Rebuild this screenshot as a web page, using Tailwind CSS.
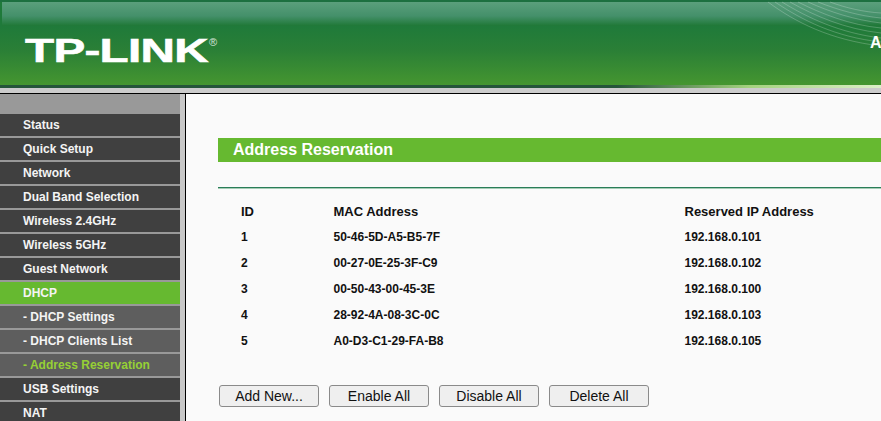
<!DOCTYPE html>
<html>
<head>
<meta charset="utf-8">
<script src="https://cdn.jsdelivr.net/npm/@tailwindcss/browser@4"></script>
</head>
<body class="w-[881px] h-[421px] overflow-hidden bg-[#fafafa] font-['Liberation_Sans',Arial,sans-serif]">
<header class="relative h-[85px] overflow-hidden bg-[linear-gradient(to_bottom,#1f7a3a_0,#1f7a3a_26px,#2a7f36_50px,#459630_85px)]">
  <div class="absolute left-[2px] right-0 top-[2px] h-[24px] bg-[linear-gradient(to_bottom,#5b9f7c_0,#44906a_14px,#1f7836_24px)]"></div>
  <div class="absolute left-0 right-0 top-0 h-[2px] bg-[#1d7040]"></div>
  <svg class="absolute right-0 top-0" width="181" height="50" viewBox="0 0 181 50" fill="none" stroke="#ffffff" stroke-opacity="0.22">
    <path d="M68 2 C95 22 130 40 181 46"/>
    <path d="M75 2 C102 20 135 37 181 42"/>
    <path d="M82 2 C108 18 140 33 181 38"/>
    <path d="M90 2 C115 16 145 29 181 33"/>
    <path d="M98 2 C122 14 150 25 181 28"/>
    <path d="M108 2 C130 12 155 20 181 23"/>
    <path d="M118 2 C138 10 160 16 181 18"/>
    <path d="M130 2 C146 8 164 12 181 13"/>
  </svg>
  <div class="absolute left-[25px] top-[30px] text-[34px] leading-[40px] font-bold text-white origin-left scale-x-[1.4] tracking-[-0.5px] [-webkit-text-stroke:0.6px_white]">TP-LINK</div>
  <div class="absolute left-[209px] top-[36px] text-[11px] leading-[12px] text-white/80">®</div>
  <div class="absolute left-[870px] top-[34px] text-[16px] leading-[18px] font-bold text-white">A</div>
</header>
<div class="h-[3px] bg-[linear-gradient(to_right,#25553a_0,#25553a_70%,#a4d27e_85%,#dcefc8_100%)]"></div>
<div class="h-[5px] bg-[#cccccc]"></div>
<div class="h-px bg-black"></div>
<div class="flex h-[327px]">
  <nav class="w-[180px] shrink-0 bg-[#999999] pt-[20px] text-[12px] leading-[22px] font-bold text-[#f4f4f4] flex flex-col gap-[2px]">
    <div class="h-[22px] shrink-0 pl-[23px] bg-[#404040]">Status</div>
    <div class="h-[22px] shrink-0 pl-[23px] bg-[#404040]">Quick Setup</div>
    <div class="h-[22px] shrink-0 pl-[23px] bg-[#404040]">Network</div>
    <div class="h-[22px] shrink-0 pl-[23px] bg-[#404040]">Dual Band Selection</div>
    <div class="h-[22px] shrink-0 pl-[23px] bg-[#404040]">Wireless 2.4GHz</div>
    <div class="h-[22px] shrink-0 pl-[23px] bg-[#404040]">Wireless 5GHz</div>
    <div class="h-[22px] shrink-0 pl-[23px] bg-[#404040]">Guest Network</div>
    <div class="h-[22px] shrink-0 pl-[23px] bg-[#66b930]">DHCP</div>
    <div class="h-[22px] shrink-0 pl-[23px] bg-[#5e5e5e]">- DHCP Settings</div>
    <div class="h-[22px] shrink-0 pl-[23px] bg-[#5e5e5e]">- DHCP Clients List</div>
    <div class="h-[22px] shrink-0 pl-[23px] bg-[#5e5e5e] text-[#96d035]">- Address Reservation</div>
    <div class="h-[22px] shrink-0 pl-[23px] bg-[#404040]">USB Settings</div>
    <div class="h-[22px] shrink-0 pl-[23px] bg-[#404040]">NAT</div>
  </nav>
  <div class="w-[5px] shrink-0 bg-[#c8c8c8]"></div>
  <div class="w-px shrink-0 bg-black"></div>
  <main class="flex-1 min-w-0 pl-[32px] pt-[44px]">
    <div class="h-[24px] pl-[15px] bg-[#66b930] text-white text-[16px] leading-[23px] font-bold">Address Reservation</div>
    <div class="mt-[25px] h-[2px] bg-[linear-gradient(to_bottom,#2a7d58_50%,#a5cdb6_50%)]"></div>
    <table class="mt-[10px] ml-[23px] w-[600px] table-fixed text-[12px] font-bold text-[#111111] border-collapse">
      <tbody>
        <tr class="h-[25px] text-[13px]"><td class="w-[92.5px] p-0">ID</td><td class="w-[351px] p-0">MAC Address</td><td class="p-0">Reserved IP Address</td></tr>
        <tr class="h-[26px]"><td class="p-0">1</td><td class="p-0">50-46-5D-A5-B5-7F</td><td class="p-0">192.168.0.101</td></tr>
        <tr class="h-[26px]"><td class="p-0">2</td><td class="p-0">00-27-0E-25-3F-C9</td><td class="p-0">192.168.0.102</td></tr>
        <tr class="h-[26px]"><td class="p-0">3</td><td class="p-0">00-50-43-00-45-3E</td><td class="p-0">192.168.0.100</td></tr>
        <tr class="h-[26px]"><td class="p-0">4</td><td class="p-0">28-92-4A-08-3C-0C</td><td class="p-0">192.168.0.103</td></tr>
        <tr class="h-[26px]"><td class="p-0">5</td><td class="p-0">A0-D3-C1-29-FA-B8</td><td class="p-0">192.168.0.105</td></tr>
      </tbody>
    </table>
    <div class="mt-[31px] ml-px flex gap-[10px]">
      <button class="w-[100px] h-[22px] shrink-0 rounded-[3px] border border-[#8a8a8a] bg-[#efefef] text-[14px] leading-[20px] text-[#111111]">Add New...</button>
      <button class="w-[100px] h-[22px] shrink-0 rounded-[3px] border border-[#8a8a8a] bg-[#efefef] text-[14px] leading-[20px] text-[#111111]">Enable All</button>
      <button class="w-[100px] h-[22px] shrink-0 rounded-[3px] border border-[#8a8a8a] bg-[#efefef] text-[14px] leading-[20px] text-[#111111]">Disable All</button>
      <button class="w-[100px] h-[22px] shrink-0 rounded-[3px] border border-[#8a8a8a] bg-[#efefef] text-[14px] leading-[20px] text-[#111111]">Delete All</button>
    </div>
  </main>
</div>
</body>
</html>
